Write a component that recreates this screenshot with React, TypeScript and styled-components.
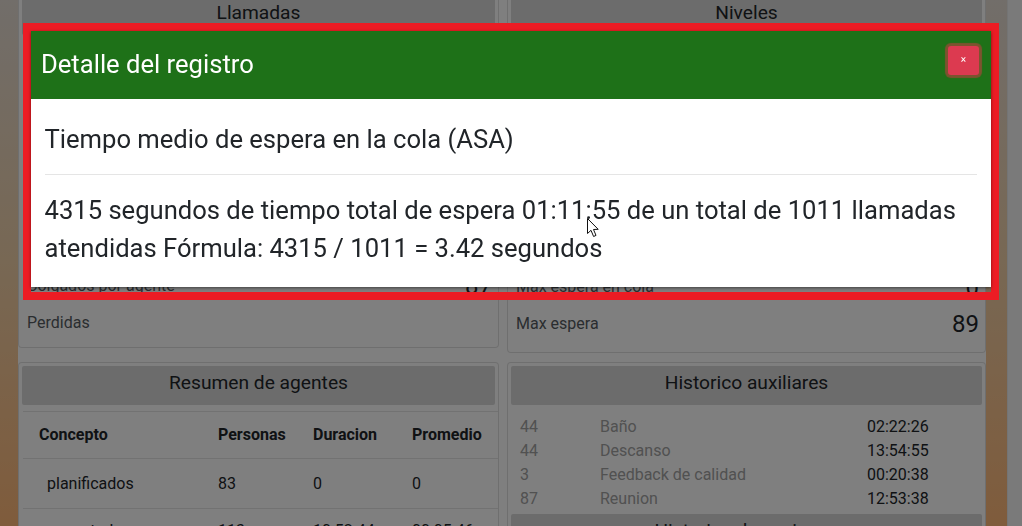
import React from "react";
import styled, { createGlobalStyle } from "styled-components";

const GlobalStyle = createGlobalStyle`
  html, body {
    margin: 0;
    padding: 0;
    height: 526px;
    overflow: hidden;
    font-family: Roboto, "Liberation Sans", sans-serif;
    color: #212529;
  }
  * { box-sizing: border-box; }
`;

const Page = styled.div`
  display: flex;
  height: 526px;
  overflow: hidden;
`;

const Background = styled.div`
  flex: 1;
  height: 526px;
  padding: 0 21px 0 18px;
  background: linear-gradient(180deg, #e4dcd4 0%, #f0d0a8 50%, #ffb878 100%);
  overflow: hidden;
`;

const Scrollbar = styled.div`
  width: 15px;
  background: #f4f4f4;
  border-left: 1px solid #e8e8e8;
`;

const Container = styled.div`
  background: #ffffff;
  margin-top: -8px;
  display: grid;
  grid-template-columns: 481px 479px;
  column-gap: 8px;
  row-gap: 9px;
  align-items: start;
`;

const Card = styled.section<{ $height?: number }>`
  border: 1px solid rgba(0, 0, 0, 0.125);
  border-radius: 4px;
  padding: 3px 3px 0;
  background: #ffffff;
  height: ${(p) => (p.$height ? `${p.$height}px` : "auto")};
`;

const CardTitle = styled.h2`
  margin: 0;
  height: 39px;
  padding-top: 1px;
  line-height: 32px;
  font-size: 19.2px;
  font-weight: 400;
  text-align: center;
  color: #212529;
  background: #d8d8d8;
  border-radius: 2px;
`;

const Stats = styled.div<{ $top: number }>`
  padding: ${(p) => p.$top}px 5px 0;
`;

const StatRow = styled.div`
  display: flex;
  align-items: center;
  justify-content: space-between;
  height: 37px;
  font-size: 16px;
  color: #555b61;
`;

const StatValue = styled.span`
  margin-right: -2px;
  font-size: 24px;
  color: #212529;
`;

const AgentTable = styled.div`
  margin: 6px -3px 0 1px;
  border-top: 1px solid rgba(0, 0, 0, 0.1);
`;

const AgentRow = styled.div<{ $head?: boolean; $height?: number }>`
  display: grid;
  grid-template-columns: 179px 95px 99px 1fr;
  align-items: center;
  height: ${(p) => p.$height ?? 50}px;
  padding-left: 16px;
  padding-bottom: ${(p) => (p.$head ? 2 : 0)}px;
  border-bottom: 1px solid rgba(0, 0, 0, 0.1);
  font-size: 16px;
  font-weight: ${(p) => (p.$head ? 700 : 400)};
  color: #212529;
`;

const AgentName = styled.span`
  padding-left: 8px;
`;

const AuxList = styled.div`
  padding: 10px 9px 3px;
`;

const AuxRow = styled.div`
  display: grid;
  grid-template-columns: 80px 267px 1fr;
  height: 24px;
  line-height: 24px;
  font-size: 16px;
  color: #a2a2a2;
`;

const AuxTime = styled.span`
  color: #212529;
`;

const Overlay = styled.div`
  position: fixed;
  inset: 0;
  padding: 23px;
  background: rgba(0, 0, 0, 0.5);
`;

const Modal = styled.div`
  width: 976px;
  height: 277px;
  border: 8px solid #ec1c24;
`;

const ModalContent = styled.div`
  background: #ffffff;
  box-shadow: 0 1px 3px rgba(0, 0, 0, 0.5);
`;

const ModalHeader = styled.header`
  display: flex;
  align-items: center;
  justify-content: space-between;
  height: 68px;
  padding: 0 12px 0 10px;
  background: #1e7118;
`;

const ModalTitle = styled.h1`
  margin: -2px 0 0;
  font-size: 25.6px;
  font-weight: 400;
  color: #ffffff;
`;

const CloseButton = styled.button`
  width: 31px;
  height: 29px;
  margin-top: -10px;
  padding: 0;
  border: none;
  border-radius: 3px;
  background: #dc3a50;
  box-shadow: 0 0 1px 3px rgba(220, 53, 69, 0.5);
  color: #ffffff;
  font-family: inherit;
  font-size: 10px;
  line-height: 1;
`;

const ModalBody = styled.div`
  padding: 21px 14px 20px 13.5px;
  font-size: 25.6px;
  line-height: 38px;
  color: #212529;

  p {
    margin: 0;
  }

  hr {
    margin: 16px 0;
    border: none;
    border-top: 1px solid rgba(0, 0, 0, 0.1);
  }
`;

const Cursor = styled.svg`
  position: fixed;
  left: 587px;
  top: 218px;
`;

const leftStats = [
  ["Recibidas", "1098"],
  ["Atendidas", "1011"],
  ["Abandonadas", "0"],
  ["En cola", "0"],
  ["Transferidas", "0"],
  ["Desviadas", "0"],
  ["Colgados por agente", "87"],
  ["Perdidas", ""],
];

const rightStats = [
  ["Nivel de servicio", "99"],
  ["Nivel de atencion", "92"],
  ["ASA", "3.42"],
  ["AHT", "0"],
  ["Espera media", "4"],
  ["Max en cola", "0"],
  ["Max espera en cola", "0"],
  ["Max espera", "89"],
];

const agents = [
  ["planificados", "83", "0", "0", 50],
  ["conectados", "113", "10:52:44", "00:05:46", 44],
] as const;

const auxiliaries = [
  ["44", "Baño", "02:22:26"],
  ["44", "Descanso", "13:54:55"],
  ["3", "Feedback de calidad", "00:20:38"],
  ["87", "Reunion", "12:53:38"],
];

export default function App() {
  return (
    <>
      <GlobalStyle />
      <Page>
        <Background>
          <Container>
            <Card $height={356}>
              <CardTitle>Llamadas</CardTitle>
              <Stats $top={10}>
                {leftStats.map(([label, value]) => (
                  <StatRow key={label}>
                    <span>{label}</span>
                    <StatValue>{value}</StatValue>
                  </StatRow>
                ))}
              </Stats>
            </Card>
            <Card $height={361}>
              <CardTitle>Niveles</CardTitle>
              <Stats $top={11}>
                {rightStats.map(([label, value]) => (
                  <StatRow key={label}>
                    <span>{label}</span>
                    <StatValue>{value}</StatValue>
                  </StatRow>
                ))}
              </Stats>
            </Card>
            <Card>
              <CardTitle>Resumen de agentes</CardTitle>
              <AgentTable>
                <AgentRow $head $height={47}>
                  <span>Concepto</span>
                  <span>Personas</span>
                  <span>Duracion</span>
                  <span>Promedio</span>
                </AgentRow>
                {agents.map(([name, people, duration, average, height]) => (
                  <AgentRow key={name} $height={height}>
                    <AgentName>{name}</AgentName>
                    <span>{people}</span>
                    <span>{duration}</span>
                    <span>{average}</span>
                  </AgentRow>
                ))}
              </AgentTable>
            </Card>
            <Card>
              <CardTitle>Historico auxiliares</CardTitle>
              <AuxList>
                {auxiliaries.map(([count, label, time]) => (
                  <AuxRow key={label}>
                    <span>{count}</span>
                    <span>{label}</span>
                    <AuxTime>{time}</AuxTime>
                  </AuxRow>
                ))}
              </AuxList>
              <CardTitle>Historico de sesiones</CardTitle>
            </Card>
          </Container>
        </Background>
        <Scrollbar />
      </Page>
      <Overlay>
        <Modal>
          <ModalContent>
            <ModalHeader>
              <ModalTitle>Detalle del registro</ModalTitle>
              <CloseButton>×</CloseButton>
            </ModalHeader>
            <ModalBody>
              <p>Tiempo medio de espera en la cola (ASA)</p>
              <hr />
              <p>
                4315 segundos de tiempo total de espera 01:11:55 de un total de 1011 llamadas
                atendidas Fórmula: 4315 / 1011 = 3.42 segundos
              </p>
            </ModalBody>
          </ModalContent>
        </Modal>
      </Overlay>
      <Cursor width="13" height="20" viewBox="0 0 13 20">
        <path
          d="M0.5 0.5 L0.5 15.5 L4 12.3 L6.6 18.5 L9 17.4 L6.5 11.5 L11.2 11.3 Z"
          fill="#ffffff"
          stroke="#111111"
          strokeWidth="1"
          strokeLinejoin="round"
        />
      </Cursor>
    </>
  );
}
